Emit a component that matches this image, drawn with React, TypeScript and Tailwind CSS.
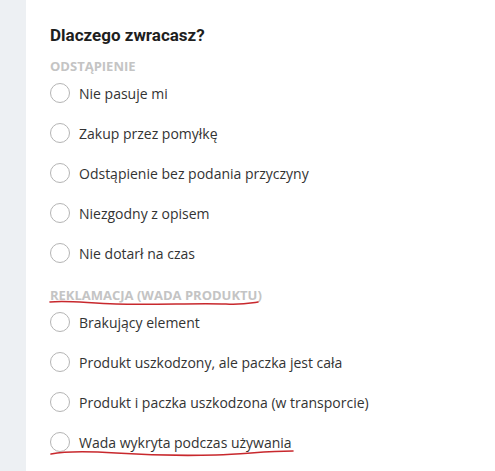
const withdrawal = [
  'Nie pasuje mi',
  'Zakup przez pomyłkę',
  'Odstąpienie bez podania przyczyny',
  'Niezgodny z opisem',
  'Nie dotarł na czas',
];

const complaint = [
  'Brakujący element',
  'Produkt uszkodzony, ale paczka jest cała',
  'Produkt i paczka uszkodzona (w transporcie)',
  'Wada wykryta podczas używania',
];

function Option({ label }: { label: string }) {
  return (
    <label className="flex h-10 cursor-pointer items-center gap-[9px]">
      <span className="h-5 w-5 shrink-0 rounded-full border border-[#b4b4b4] bg-white" />
      <span className="text-[14px] text-[#333333]">{label}</span>
    </label>
  );
}

function SectionLabel({ children }: { children: string }) {
  return (
    <div className="text-[13px] font-bold uppercase leading-4 text-[#c4c4c4]">
      {children}
    </div>
  );
}

export default function App() {
  return (
    <div
      className="flex h-[471px] w-[495px] overflow-hidden bg-white"
      style={{ fontFamily: '"Open Sans", sans-serif' }}
    >
      <div className="w-[26px] shrink-0 bg-[#edf0f3]" />

      <div className="relative flex-1 pl-6 pt-[23px]">
        <h2
          className="text-[17px] font-bold leading-6 text-[#1e1e1e]"
          style={{ fontFamily: 'Roboto, sans-serif' }}
        >
          Dlaczego zwracasz?
        </h2>

        <div className="mt-[11px]">
          <SectionLabel>Odstąpienie</SectionLabel>
        </div>
        <div className="-mt-px flex flex-col">
          {withdrawal.map((item) => (
            <Option key={item} label={item} />
          ))}
        </div>

        <div className="mt-[14px]">
          <SectionLabel>Reklamacja (wada produktu)</SectionLabel>
        </div>
        <div className="-mt-px flex flex-col">
          {complaint.map((item) => (
            <Option key={item} label={item} />
          ))}
        </div>

        {/* hand drawn red marks over the screenshot */}
        <svg
          className="pointer-events-none absolute left-0 top-0"
          width="469"
          height="471"
          viewBox="0 0 469 471"
          fill="none"
        >
          <path
            d="M24 302 C 40 300, 60 303, 90 304 C 130 305, 170 303, 200 304 C 215 305, 225 303, 232 302"
            stroke="#c8282d"
            strokeWidth="1.6"
            strokeLinecap="round"
          />
          <path
            d="M25 454 C 40 451, 60 451, 90 453 C 120 455, 150 456, 190 455 C 220 454, 240 451, 267 451"
            stroke="#c8282d"
            strokeWidth="1.6"
            strokeLinecap="round"
          />
        </svg>
      </div>
    </div>
  );
}
